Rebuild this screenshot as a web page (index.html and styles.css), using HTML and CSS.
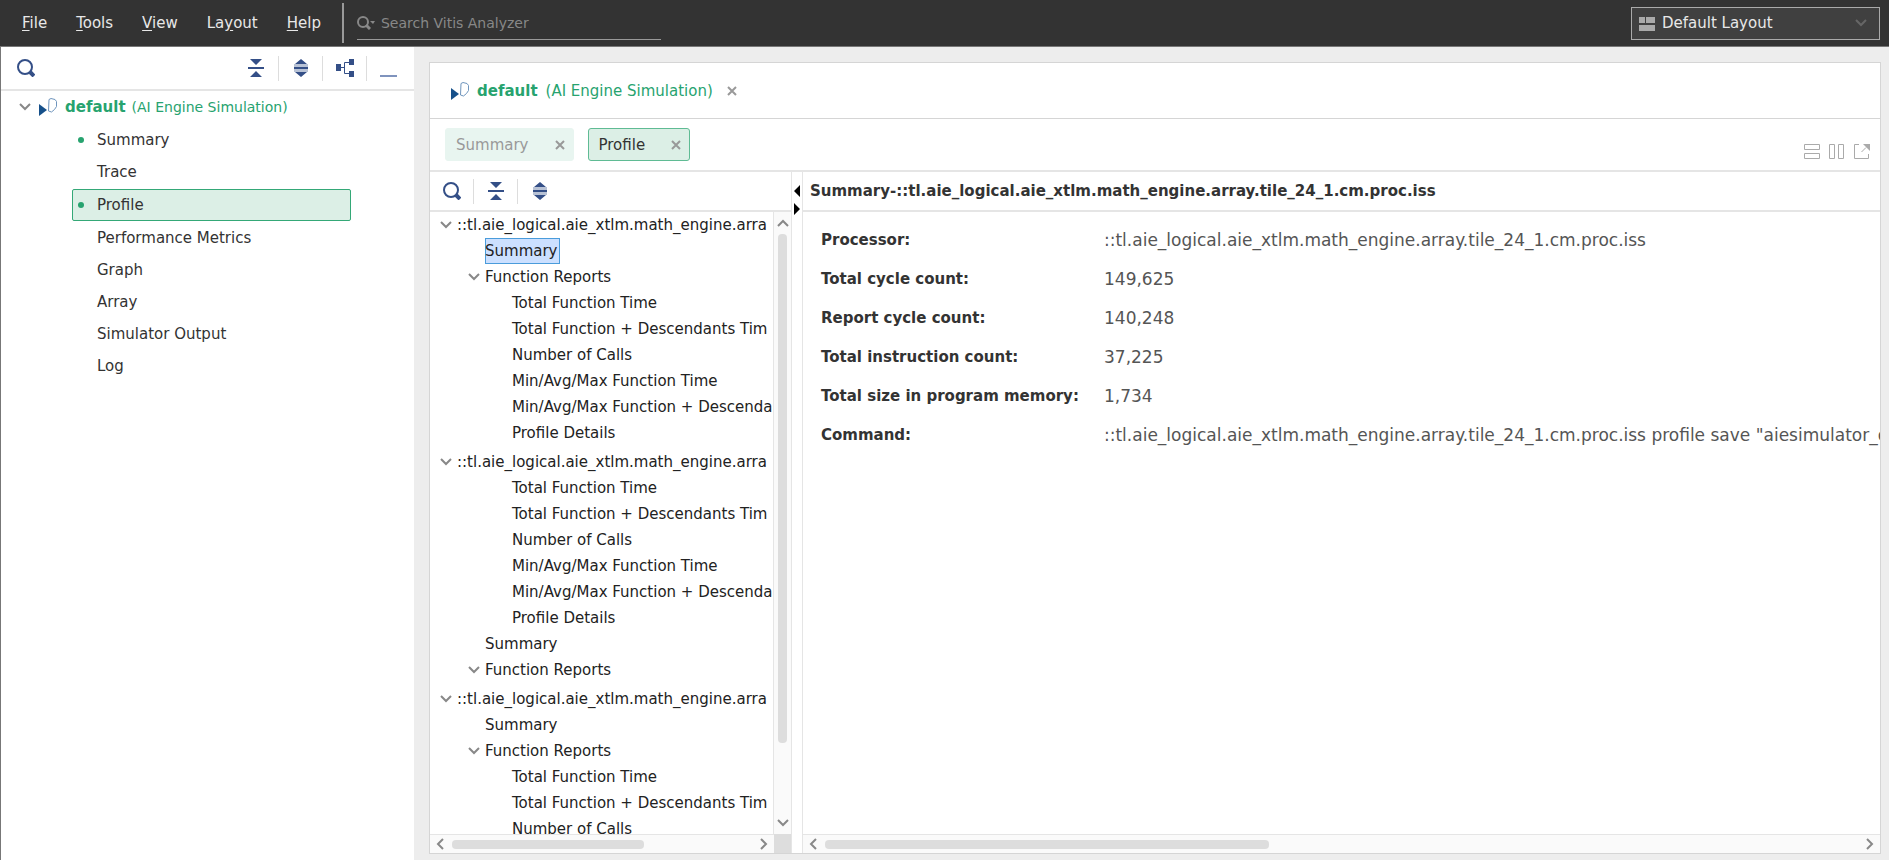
FILE: index.html
```html
<!DOCTYPE html>
<html lang="en">
<head>
    <meta charset="UTF-8">
    <meta name="viewport" content="width=device-width, initial-scale=1.0">
    <title>Vitis Analyzer</title>
    <link rel="stylesheet" href="styles.css">
</head>
<body>
    <!-- Shared icons -->
    <svg class="sprite" aria-hidden="true">
        <symbol id="icon-search" viewBox="0 0 18 18">
            <circle cx="8" cy="8" r="7" fill="none" stroke="currentColor" stroke-width="2"/>
            <path d="M13 13l4 4" stroke="currentColor" stroke-width="4"/>
        </symbol>
        <symbol id="icon-collapse" viewBox="0 0 16 18">
            <path d="M2 0h12L8 6zM2 18h12L8 12zM0 8h16v2H0z" fill="currentColor"/>
        </symbol>
        <symbol id="icon-expand" viewBox="0 0 16 18">
            <path d="M8 0l6 5H2zM8 18l6-5H2zM1 8h14v2H1z" fill="currentColor"/>
            <path d="M1 5h14v3H1zM1 10h14v3H1z" fill="currentColor" opacity=".35"/>
        </symbol>
        <symbol id="icon-hierarchy" viewBox="0 0 18 18">
            <path d="M0 5h5v7H0zM13 0h5v6h-5zM13 12h5v6h-5z" fill="currentColor"/>
            <path d="M5 8.500h4M13 3.500H8.500v11H13" fill="none" stroke="currentColor"/>
        </symbol>
        <symbol id="icon-run" viewBox="0 0 18 18">
            <path d="M0 6l8 6-8 6z" fill="#16508a"/>
            <path d="M10 1.500l2-1 4 1 1.500 2v5l-2 3-3 2.500-3-1z" fill="none" stroke="#6f95bd"/>
        </symbol>
        <symbol id="icon-chevron" viewBox="0 0 12 8">
            <path d="M1 1l5 5 5-5" fill="none" stroke="currentColor" stroke-width="2"/>
        </symbol>
        <symbol id="icon-close" viewBox="0 0 10 10">
            <path d="M1 1l8 8M9 1L1 9" stroke="currentColor" stroke-width="2"/>
        </symbol>
    </svg>

    <header class="topbar">
        <nav class="menu">
            <button><u>F</u>ile</button>
            <button><u>T</u>ools</button>
            <button><u>V</u>iew</button>
            <button>La<u>y</u>out</button>
            <button><u>H</u>elp</button>
        </nav>
        <div class="search">
            <svg class="search-icon" viewBox="0 0 18 14">
                <circle cx="6" cy="6" r="5" fill="none" stroke="currentColor" stroke-width="2"/>
                <path d="M9 9l4 4" stroke="currentColor" stroke-width="3"/>
                <path d="M13 5h5l-2 3z" fill="currentColor"/>
            </svg>
            <input type="text" aria-label="Search" placeholder="Search Vitis Analyzer">
        </div>
        <div class="layout-picker">
            <svg class="layout-icon" viewBox="0 0 16 14">
                <path d="M0 0h6v6H0zM7 0h9v6H7zM0 8h16v6H0z" fill="currentColor"/>
            </svg>
            <select aria-label="Layout">
                <option>Default Layout</option>
            </select>
            <svg class="picker-arrow"><use href="#icon-chevron"/></svg>
        </div>
    </header>

    <div class="workspace">
        <aside class="sidebar">
            <div class="toolbar sidebar-toolbar">
                <button class="tool" aria-label="Search"><svg><use href="#icon-search"/></svg></button>
                <span class="spacer"></span>
                <button class="tool" aria-label="Collapse all"><svg><use href="#icon-collapse"/></svg></button>
                <button class="tool" aria-label="Expand all"><svg><use href="#icon-expand"/></svg></button>
                <button class="tool" aria-label="Hierarchy"><svg><use href="#icon-hierarchy"/></svg></button>
                <button class="tool" aria-label="Minimize"><span class="minimize"></span></button>
            </div>
            <div class="run-title">
                <svg class="chevron"><use href="#icon-chevron"/></svg>
                <svg class="run-icon"><use href="#icon-run"/></svg>
                <strong>default</strong>
                <small>(AI Engine Simulation)</small>
            </div>
            <ul class="views">
                <li><a href="#" class="open">Summary</a></li>
                <li><a href="#">Trace</a></li>
                <li><a href="#" class="open selected">Profile</a></li>
                <li><a href="#">Performance Metrics</a></li>
                <li><a href="#">Graph</a></li>
                <li><a href="#">Array</a></li>
                <li><a href="#">Simulator Output</a></li>
                <li><a href="#">Log</a></li>
            </ul>
        </aside>

        <main class="editor">
            <div class="editor-title">
                <svg class="run-icon"><use href="#icon-run"/></svg>
                <strong>default</strong>
                <span>(AI Engine Simulation)</span>
                <button class="close" aria-label="Close"><svg><use href="#icon-close"/></svg></button>
            </div>
            <div class="tabs">
                <div class="tab">
                    <a href="#">Summary</a>
                    <button class="close" aria-label="Close Summary"><svg><use href="#icon-close"/></svg></button>
                </div>
                <div class="tab active">
                    <a href="#">Profile</a>
                    <button class="close" aria-label="Close Profile"><svg><use href="#icon-close"/></svg></button>
                </div>
                <div class="window-tools">
                    <button aria-label="Split rows">
                        <svg viewBox="0 0 16 16"><path d="M.5.5h15v5H.5zM.5 9.500h15v5H.5z" fill="none" stroke="currentColor"/></svg>
                    </button>
                    <button aria-label="Split columns">
                        <svg viewBox="0 0 16 16"><path d="M.5.5h5v14h-5zM9.500.5h5v14h-5z" fill="none" stroke="currentColor"/></svg>
                    </button>
                    <button aria-label="Open in window">
                        <svg viewBox="0 0 16 16">
                            <path d="M5 .5H.5v14h14V10M7.500 8L12 3.500" fill="none" stroke="currentColor"/>
                            <path d="M9 0h7v7z" fill="currentColor"/>
                        </svg>
                    </button>
                </div>
            </div>

            <div class="panes">
                <section class="tree-pane">
                    <div class="toolbar">
                        <button class="tool" aria-label="Search"><svg><use href="#icon-search"/></svg></button>
                        <button class="tool" aria-label="Collapse all"><svg><use href="#icon-collapse"/></svg></button>
                        <button class="tool" aria-label="Expand all"><svg><use href="#icon-expand"/></svg></button>
                    </div>
                    <div class="tree-scroll">
                        <div class="tree">
                            <ul>
                                <li class="root"><svg class="chevron"><use href="#icon-chevron"/></svg>::tl.aie_logical.aie_xtlm.math_engine.arra</li>
                                <li class="node"><span class="picked">Summary</span></li>
                                <li class="node"><svg class="chevron"><use href="#icon-chevron"/></svg>Function Reports</li>
                                <li class="leaf">Total Function Time</li>
                                <li class="leaf">Total Function + Descendants Tim</li>
                                <li class="leaf">Number of Calls</li>
                                <li class="leaf">Min/Avg/Max Function Time</li>
                                <li class="leaf">Min/Avg/Max Function + Descenda</li>
                                <li class="leaf">Profile Details</li>
                            </ul>
                            <ul>
                                <li class="root"><svg class="chevron"><use href="#icon-chevron"/></svg>::tl.aie_logical.aie_xtlm.math_engine.arra</li>
                                <li class="leaf">Total Function Time</li>
                                <li class="leaf">Total Function + Descendants Tim</li>
                                <li class="leaf">Number of Calls</li>
                                <li class="leaf">Min/Avg/Max Function Time</li>
                                <li class="leaf">Min/Avg/Max Function + Descenda</li>
                                <li class="leaf">Profile Details</li>
                                <li class="node">Summary</li>
                                <li class="node"><svg class="chevron"><use href="#icon-chevron"/></svg>Function Reports</li>
                            </ul>
                            <ul>
                                <li class="root"><svg class="chevron"><use href="#icon-chevron"/></svg>::tl.aie_logical.aie_xtlm.math_engine.arra</li>
                                <li class="node">Summary</li>
                                <li class="node"><svg class="chevron"><use href="#icon-chevron"/></svg>Function Reports</li>
                                <li class="leaf">Total Function Time</li>
                                <li class="leaf">Total Function + Descendants Tim</li>
                                <li class="leaf">Number of Calls</li>
                            </ul>
                        </div>
                        <div class="vbar">
                            <svg class="chevron up"><use href="#icon-chevron"/></svg>
                            <div class="track"><div class="thumb"></div></div>
                            <svg class="chevron"><use href="#icon-chevron"/></svg>
                        </div>
                    </div>
                    <div class="hbar-row">
                        <div class="hbar">
                            <svg class="chevron left"><use href="#icon-chevron"/></svg>
                            <div class="track"><div class="thumb tree-thumb"></div></div>
                            <svg class="chevron right"><use href="#icon-chevron"/></svg>
                        </div>
                        <div class="corner"></div>
                    </div>
                </section>

                <div class="splitter">
                    <svg viewBox="0 0 6 30"><path d="M6 0v12L0 6zM0 18v12l6-6z" fill="#000"/></svg>
                </div>

                <section class="detail-pane">
                    <h1>Summary-::tl.aie_logical.aie_xtlm.math_engine.array.tile_24_1.cm.proc.iss</h1>
                    <div class="detail">
                        <table>
                            <tr><th>Processor:</th><td>::tl.aie_logical.aie_xtlm.math_engine.array.tile_24_1.cm.proc.iss</td></tr>
                            <tr><th>Total cycle count:</th><td>149,625</td></tr>
                            <tr><th>Report cycle count:</th><td>140,248</td></tr>
                            <tr><th>Total instruction count:</th><td>37,225</td></tr>
                            <tr><th>Total size in program memory:</th><td>1,734</td></tr>
                            <tr><th>Command:</th><td>::tl.aie_logical.aie_xtlm.math_engine.array.tile_24_1.cm.proc.iss profile save "aiesimulator_o</td></tr>
                        </table>
                    </div>
                    <div class="hbar">
                        <svg class="chevron left"><use href="#icon-chevron"/></svg>
                        <div class="track"><div class="thumb detail-thumb"></div></div>
                        <svg class="chevron right"><use href="#icon-chevron"/></svg>
                    </div>
                </section>
            </div>
        </main>
    </div>
</body>
</html>
```
FILE: styles.css
```css
* {
    box-sizing: border-box;
}
body {
    display: flex;
    flex-direction: column;
    height: 100vh;
    margin: 0;
    font-family: "DejaVu Sans", sans-serif;
    font-size: 15px;
    color: #333;
    background-color: #ededed;
}
button, input, select {
    font: inherit;
    color: inherit;
    background: none;
    border: none;
    padding: 0;
}
svg {
    display: block;
    flex: none;
}
ul {
    list-style: none;
    margin: 0;
    padding: 0;
}
a {
    color: inherit;
    text-decoration: none;
}
.sprite {
    display: none;
}

/* Top bar */
.topbar {
    display: flex;
    align-items: center;
    height: 47px;
    padding-right: 9px;
    background-color: #333;
    border-bottom: 1px solid #777;
    color: #e8e8e8;
}
.menu {
    display: flex;
    gap: 29px;
    padding: 0 21px 0 22px;
    height: 40px;
    border-right: 2px solid #999;
}
.menu u {
    text-underline-offset: 2px;
}
.search {
    display: flex;
    align-items: center;
    gap: 6px;
    width: 304px;
    height: 34px;
    margin-left: 13px;
    border-bottom: 1px solid #999;
    color: #888;
    font-size: 14px;
}
.search input {
    flex: 1;
    min-width: 0;
}
.search input::placeholder {
    color: #888;
}
.search-icon {
    width: 18px;
    height: 14px;
}
.layout-picker {
    position: relative;
    width: 249px;
    margin-left: auto;
}
.layout-picker select {
    appearance: none;
    width: 100%;
    height: 33px;
    padding-left: 30px;
    background-color: #404040;
    border: 1px solid #aaa;
}
.layout-icon {
    position: absolute;
    left: 8px;
    top: 10px;
    width: 16px;
    height: 14px;
    color: #aaa;
}
.picker-arrow {
    position: absolute;
    right: 13px;
    top: 12px;
    width: 12px;
    height: 8px;
    color: #666;
}

/* Sidebar */
.workspace {
    display: flex;
    flex: 1;
    min-height: 0;
}
.sidebar {
    width: 414px;
    flex: none;
    background-color: #fff;
    border-left: 1px solid #777;
}
.toolbar {
    display: flex;
    align-items: center;
    height: 40px;
    border-bottom: 2px solid #e5e5e5;
    color: #344f87;
}
.sidebar-toolbar {
    height: 44px;
    padding: 0 4px 0 3px;
}
.spacer {
    flex: 1;
}
.tool {
    display: flex;
    justify-content: center;
    align-items: center;
    width: 44px;
    height: 25px;
}
.tool:first-child {
    width: 43px;
}
.tool svg {
    width: 18px;
    height: 18px;
}
.tool + .tool {
    border-left: 1px solid #ddd;
}
.minimize {
    width: 17px;
    height: 2px;
    margin-top: 16px;
    background-color: #7f93bd;
}
.chevron {
    width: 12px;
    height: 8px;
    color: #888;
}
.run-icon {
    width: 18px;
    height: 18px;
}
.run-title {
    display: flex;
    align-items: center;
    height: 32px;
    padding-left: 18px;
    color: #27a36f;
}
.run-title .run-icon {
    margin: 0 8px;
}
.run-title small {
    margin-left: 6px;
    font-size: 14px;
}
.views {
    padding: 1px 63px 0 71px;
}
.views a {
    display: flex;
    align-items: center;
    height: 32px;
    padding-left: 24px;
    border: 1px solid transparent;
}
.views .open {
    padding-left: 5px;
}
.views .open::before {
    content: "";
    width: 6px;
    height: 6px;
    margin-right: 13px;
    border-radius: 50%;
    background-color: #27a36f;
}
.views .selected {
    margin: 1px 0;
    background-color: #dcefe6;
    border-color: #34a877;
    border-radius: 2px;
}

/* Editor */
.editor {
    display: flex;
    flex-direction: column;
    flex: 1;
    min-width: 0;
    margin: 15px 8px 6px 15px;
    background-color: #fff;
    border: 1px solid #d5d5d5;
}
.editor-title {
    display: flex;
    align-items: center;
    height: 56px;
    padding-left: 21px;
    border-bottom: 1px solid #d5d5d5;
    color: #27a36f;
}
.editor-title .run-icon {
    margin-right: 8px;
}
.editor-title span {
    margin: 0 14px 0 8px;
}
.close {
    color: #999;
}
.close svg {
    width: 10px;
    height: 10px;
}
.tabs {
    display: flex;
    align-items: center;
    gap: 14px;
    height: 53px;
    padding: 0 10px 0 15px;
    border-bottom: 2px solid #e5e5e5;
}
.tab {
    display: flex;
    align-items: center;
    gap: 26px;
    height: 33px;
    padding: 0 8px 0 10px;
    border: 1px solid #e8f5f0;
    border-radius: 3px;
    background-color: #e8f5f0;
    color: #999;
}
.tab.active {
    border-color: #5fbb94;
    background-color: #dcefe6;
    color: #333;
}
.window-tools {
    display: flex;
    gap: 9px;
    margin-left: auto;
    padding-top: 14px;
    color: #aaa;
}
.window-tools svg {
    width: 16px;
    height: 16px;
}
.panes {
    display: flex;
    flex: 1;
    min-height: 0;
}

/* Report tree */
.tree-pane {
    display: flex;
    flex-direction: column;
    width: 362px;
    flex: none;
    border-right: 1px solid #e5e5e5;
}
.tree-scroll {
    display: flex;
    flex: 1;
    min-height: 0;
}
.tree {
    flex: 1;
    min-width: 0;
    overflow: hidden;
    color: #222;
}
.tree ul {
    margin-bottom: 3px;
}
.tree li {
    display: flex;
    align-items: center;
    height: 26px;
    white-space: nowrap;
}
.tree .root {
    padding-left: 27px;
}
.tree .node {
    padding-left: 55px;
}
.tree .leaf {
    padding-left: 82px;
}
.tree .chevron {
    margin: 0 5px 0 -17px;
}
.picked {
    height: 26px;
    padding-right: 2px;
    line-height: 26px;
    background-color: #cce0ff;
    box-shadow: inset 0 0 0 1px #4a9cdb;
}
.vbar {
    display: flex;
    flex-direction: column;
    align-items: center;
    gap: 7px;
    width: 18px;
    padding: 7px 0;
    background-color: #fafafa;
    border-left: 1px solid #e5e5e5;
}
.track {
    flex: 1;
}
.thumb {
    border-radius: 4px;
    background-color: #ddd;
}
.vbar .thumb {
    width: 9px;
    height: 88%;
}
.up {
    transform: rotate(180deg);
}
.left {
    transform: rotate(90deg);
}
.right {
    transform: rotate(-90deg);
}
.hbar-row {
    display: flex;
}
.hbar {
    display: flex;
    align-items: center;
    gap: 6px;
    flex: 1;
    height: 19px;
    padding: 0 4px;
    background-color: #fafafa;
    border-top: 1px solid #e5e5e5;
}
.hbar .thumb {
    height: 9px;
}
.tree-thumb {
    width: 64%;
}
.detail-thumb {
    width: 43%;
}
.corner {
    width: 17px;
    background-color: #ddd;
}
.splitter {
    display: flex;
    justify-content: center;
    width: 10px;
    padding-top: 13px;
}
.splitter svg {
    width: 6px;
    height: 30px;
}

/* Detail */
.detail-pane {
    display: flex;
    flex-direction: column;
    flex: 1;
    min-width: 0;
    border-left: 1px solid #e5e5e5;
}
.detail-pane h1 {
    height: 40px;
    margin: 0;
    padding-left: 7px;
    border-bottom: 2px solid #e5e5e5;
    font-size: 15px;
    line-height: 38px;
}
.detail {
    flex: 1;
    overflow: hidden;
    padding: 8px 0 0 18px;
}
.detail table {
    border-collapse: collapse;
    white-space: nowrap;
}
.detail tr {
    height: 39px;
}
.detail th {
    min-width: 283px;
    padding: 0;
    text-align: left;
}
.detail td {
    padding: 0;
    color: #555;
    font-size: 17px;
}
.detail-pane .hbar {
    flex: none;
}
```
